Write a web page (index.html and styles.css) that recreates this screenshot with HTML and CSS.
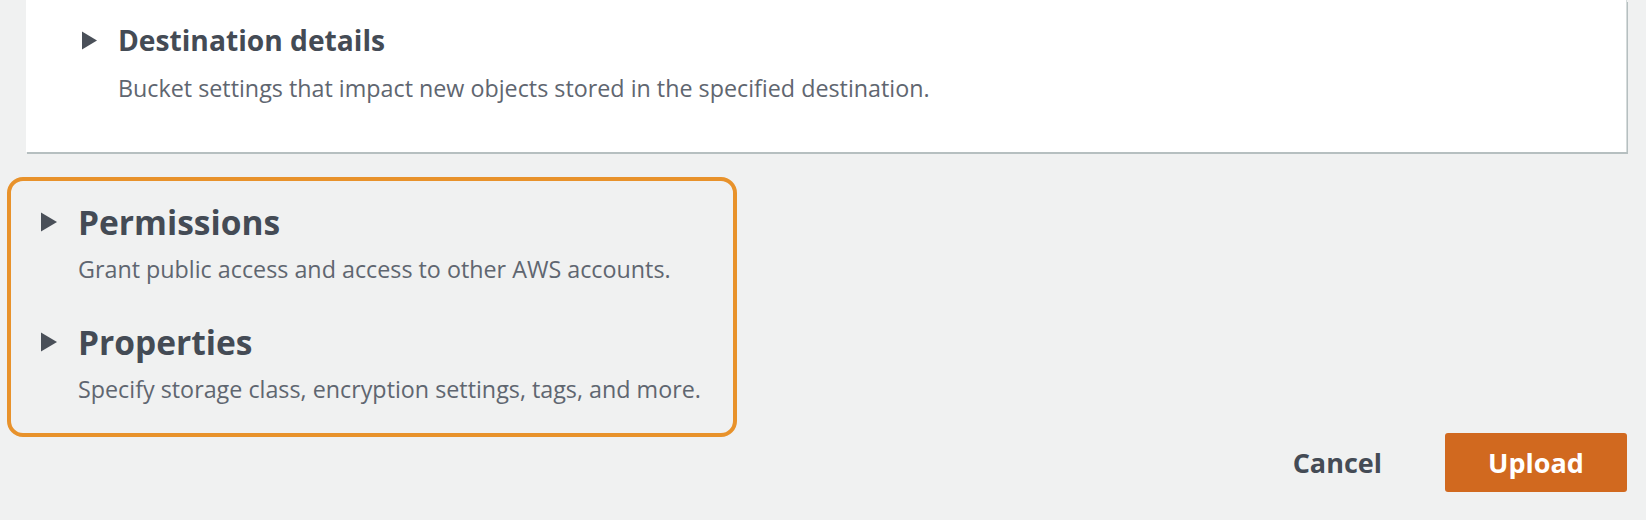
FILE: index.html
```html
<!DOCTYPE html>
<html lang="en">
<head>
<meta charset="utf-8">
<title>Upload</title>
<link rel="stylesheet" href="styles.css">
</head>
<body>
<div class="page">
  <section class="card">
    <div class="expander">
      <div class="expander-head">
        <svg class="caret caret-sm" viewBox="0 0 15 19" aria-hidden="true"><path d="M0 0.5 L15 9.5 L0 18.5 Z" fill="#4a5059"/></svg>
        <h2 class="title title-sm">Destination details</h2>
      </div>
      <p class="desc">Bucket settings that impact new objects stored in the specified destination.</p>
    </div>
  </section>

  <div class="highlight">
    <div class="expander">
      <div class="expander-head">
        <svg class="caret" viewBox="0 0 16 20" aria-hidden="true"><path d="M0 0.5 L16 10 L0 19.5 Z" fill="#4a5059"/></svg>
        <h2 class="title">Permissions</h2>
      </div>
      <p class="desc">Grant public access and access to other AWS accounts.</p>
    </div>
    <div class="expander expander-gap">
      <div class="expander-head">
        <svg class="caret" viewBox="0 0 16 20" aria-hidden="true"><path d="M0 0.5 L16 10 L0 19.5 Z" fill="#4a5059"/></svg>
        <h2 class="title">Properties</h2>
      </div>
      <p class="desc">Specify storage class, encryption settings, tags, and more.</p>
    </div>
  </div>

  <div class="actions">
    <button class="btn-link" type="button">Cancel</button>
    <button class="btn-primary" type="button">Upload</button>
  </div>
</div>
</body>
</html>
```

FILE: styles.css
```css
* { box-sizing: border-box; }

html, body {
  margin: 0;
  padding: 0;
}

body {
  background: #f0f1f1;
  font-family: "Open Sans", "Noto Sans", sans-serif;
  color: #4a5059;
  width: 1646px;
  height: 520px;
  overflow: hidden;
}

.page {
  display: flex;
  flex-direction: column;
}

.card {
  margin: 0 19px 0 26px;
  background: #ffffff;
  padding: 22px 0 50px 56px;
  border-right: 1px solid #d5dbdb;
  box-shadow: 1px 2px 0 #b6bfc0;
}

.expander-head {
  display: flex;
  align-items: center;
  gap: 21px;
}

.caret {
  width: 16px;
  height: 20px;
  flex: none;
}

.caret-sm {
  width: 15px;
  height: 19px;
}

.title {
  margin: 0;
  font-size: 33.5px;
  line-height: 44px;
  font-weight: 700;
  color: #444b55;
}

.title-sm {
  font-size: 28.2px;
  line-height: 36px;
}

.desc {
  margin: 0;
  font-size: 23.3px;
  line-height: 28px;
  color: #5f6670;
}

.card .desc {
  margin-top: 16px;
  padding-left: 36px;
}

.highlight {
  margin: 25px 0 0 7px;
  width: 730px;
  border: 4px solid #e8922b;
  border-radius: 16px;
  padding: 19px 0 30px 30px;
}

.highlight .desc {
  margin-top: 11px;
  padding-left: 37px;
}

.expander-gap {
  margin-top: 37px;
}

.actions {
  display: flex;
  justify-content: flex-end;
  align-items: center;
  margin: -4px 19px 0 0;
}

.btn-link {
  border: 0;
  background: transparent;
  padding: 0;
  margin-right: 63px;
  font-family: inherit;
  font-size: 27px;
  font-weight: 700;
  color: #444b55;
}

.btn-primary {
  width: 182px;
  height: 59px;
  border: 0;
  border-radius: 3px;
  background: #d1691f;
  color: #ffffff;
  font-family: inherit;
  font-size: 27px;
  font-weight: 700;
}
```
